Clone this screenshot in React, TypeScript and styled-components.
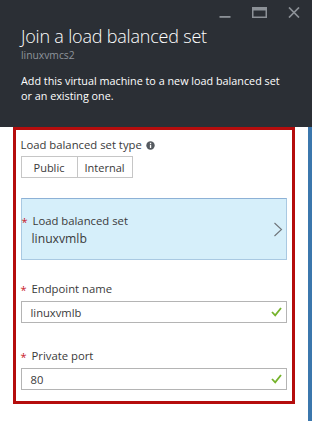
import React from "react";
import styled, { createGlobalStyle } from "styled-components";

const Global = createGlobalStyle`
  html, body { margin: 0; padding: 0; background: #ffffff; }
  body { width: 312px; height: 421px; overflow: hidden; font-family: "Open Sans", "Noto Sans", sans-serif; }
  * { box-sizing: border-box; }
`;

const Page = styled.div`
  width: 312px;
  height: 421px;
  display: flex;
  flex-direction: column;
`;

const Header = styled.header`
  height: 127px;
  background: #2b2f35;
  padding: 0 0 0 21px;
  display: flex;
  flex-direction: column;
`;

const Controls = styled.div`
  display: flex;
  justify-content: flex-end;
  align-items: flex-start;
  gap: 21px;
  padding: 7px 12px 0 0;
  height: 20px;
`;

const Title = styled.h1`
  margin: 5px 0 0;
  font-family: "Open Sans", sans-serif;
  font-weight: 300;
  font-size: 18px;
  line-height: 23px;
  color: #ffffff;
  letter-spacing: -0.2px;
`;

const Subtitle = styled.div`
  margin-top: 1px;
  font-size: 10.3px;
  line-height: 13px;
  color: #8e949b;
`;

const Description = styled.p`
  margin: 11px 0 0;
  font-size: 10.8px;
  line-height: 15px;
  color: #ffffff;
  width: 272px;
`;

const Body = styled.div`
  flex: 1;
  display: flex;
  align-items: flex-start;
`;

const Content = styled.div`
  flex: 1;
  padding-left: 13px;
`;

const Strip = styled.div`
  width: 4px;
  align-self: stretch;
  background: #3b77ad;
`;

const RedFrame = styled.section`
  width: 282px;
  height: 277px;
  border: 3.5px solid #b50d0d;
  padding: 8px 5px 0 4.5px;
  display: flex;
  flex-direction: column;
`;

const Label = styled.div<{ $gap?: number }>`
  display: flex;
  align-items: center;
  gap: 4px;
  margin-top: ${(p) => p.$gap ?? 0}px;
  font-size: 11.3px;
  line-height: 14px;
  color: #3a3a3a;
`;

const Required = styled.span`
  color: #c8191f;
  font-size: 11px;
  width: 7px;
  display: inline-block;
  line-height: 10px;
  margin-top: 2px;
`;

const Toggle = styled.div`
  display: flex;
  margin-top: 4px;
  width: max-content;
  border: 1px solid #c6c6c6;
`;

const ToggleOption = styled.div<{ $w: number }>`
  width: ${(p) => p.$w}px;
  height: 20px;
  display: flex;
  align-items: center;
  justify-content: center;
  font-size: 11px;
  color: #3a3a3a;
  & + & { border-left: 1px solid #c6c6c6; }
`;

const Picker = styled.div`
  margin-top: 20px;
  height: 62px;
  background: #d6effa;
  border: 1px solid #a9c9e2;
  border-top-color: #8db1d6;
  display: flex;
  align-items: center;
  justify-content: space-between;
  padding: 0 3px 0 0;
`;

const PickerText = styled.div`
  display: flex;
  flex-direction: column;
  gap: 3px;
  padding-top: 2px;
`;

const PickerValue = styled.div`
  padding-left: 10px;
  font-size: 12.2px;
  line-height: 16px;
  color: #3a3a3a;
`;

const Field = styled.div`
  margin-top: 5px;
  height: 22px;
  border: 1px solid #b4b4b4;
  display: flex;
  align-items: center;
  justify-content: space-between;
  padding: 0 4px 0 9px;
  font-size: 11.2px;
  color: #3a3a3a;
  background: #fff;
`;

const Icon = styled.svg`
  display: block;
`;

const Minimize = () => (
  <Icon width="12" height="12" viewBox="0 0 12 12">
    <rect x="0.5" y="9" width="11" height="1.8" fill="#8c9197" />
  </Icon>
);
const Maximize = () => (
  <Icon width="15" height="11" viewBox="0 0 15 11">
    <rect x="0.75" y="0.75" width="13.5" height="9.5" fill="none" stroke="#8c9197" strokeWidth="1.5" />
    <rect x="0.5" y="0.5" width="14" height="3" fill="#8c9197" />
  </Icon>
);
const Close = () => (
  <Icon width="12" height="11" viewBox="0 0 12 11">
    <path d="M1 0.5 L11 10.5 M11 0.5 L1 10.5" stroke="#8c9197" strokeWidth="1.7" />
  </Icon>
);

const Info = () => (
  <Icon width="9" height="9" viewBox="0 0 9 9">
    <circle cx="4.5" cy="4.5" r="4.2" fill="#555a60" />
    <rect x="3.9" y="3.7" width="1.3" height="3.3" fill="#fff" />
    <rect x="3.9" y="1.8" width="1.3" height="1.2" fill="#fff" />
  </Icon>
);

const Chevron = () => (
  <Icon width="10" height="15" viewBox="0 0 10 15">
    <path d="M1.5 1 L8.5 7.5 L1.5 14" fill="none" stroke="#6e7378" strokeWidth="1.1" />
  </Icon>
);

const Check = () => (
  <Icon width="11" height="10" viewBox="0 0 11 10">
    <path d="M1 5 L4.2 8.4 L10 1" fill="none" stroke="#75b32b" strokeWidth="1.8" />
  </Icon>
);

export default function App() {
  return (
    <Page>
      <Global />
      <Header>
        <Controls>
          <Minimize />
          <Maximize />
          <Close />
        </Controls>
        <Title>Join a load balanced set</Title>
        <Subtitle>linuxvmcs2</Subtitle>
        <Description>
          Add this virtual machine to a new load balanced set or an existing one.
        </Description>
      </Header>
      <Body>
        <Content>
          <RedFrame>
            <Label>
              Load balanced set type <Info />
            </Label>
            <Toggle>
              <ToggleOption $w={55}>Public</ToggleOption>
              <ToggleOption $w={55}>Internal</ToggleOption>
            </Toggle>
            <Picker>
              <PickerText>
                <Label>
                  <Required>*</Required>
                  <span>Load balanced set</span>
                </Label>
                <PickerValue>linuxvmlb</PickerValue>
              </PickerText>
              <Chevron />
            </Picker>
            <Label $gap={22}>
              <Required>*</Required>
              <span>Endpoint name</span>
            </Label>
            <Field>
              <span>linuxvmlb</span>
              <Check />
            </Field>
            <Label $gap={26}>
              <Required>*</Required>
              <span>Private port</span>
            </Label>
            <Field>
              <span>80</span>
              <Check />
            </Field>
          </RedFrame>
        </Content>
        <Strip />
      </Body>
    </Page>
  );
}
